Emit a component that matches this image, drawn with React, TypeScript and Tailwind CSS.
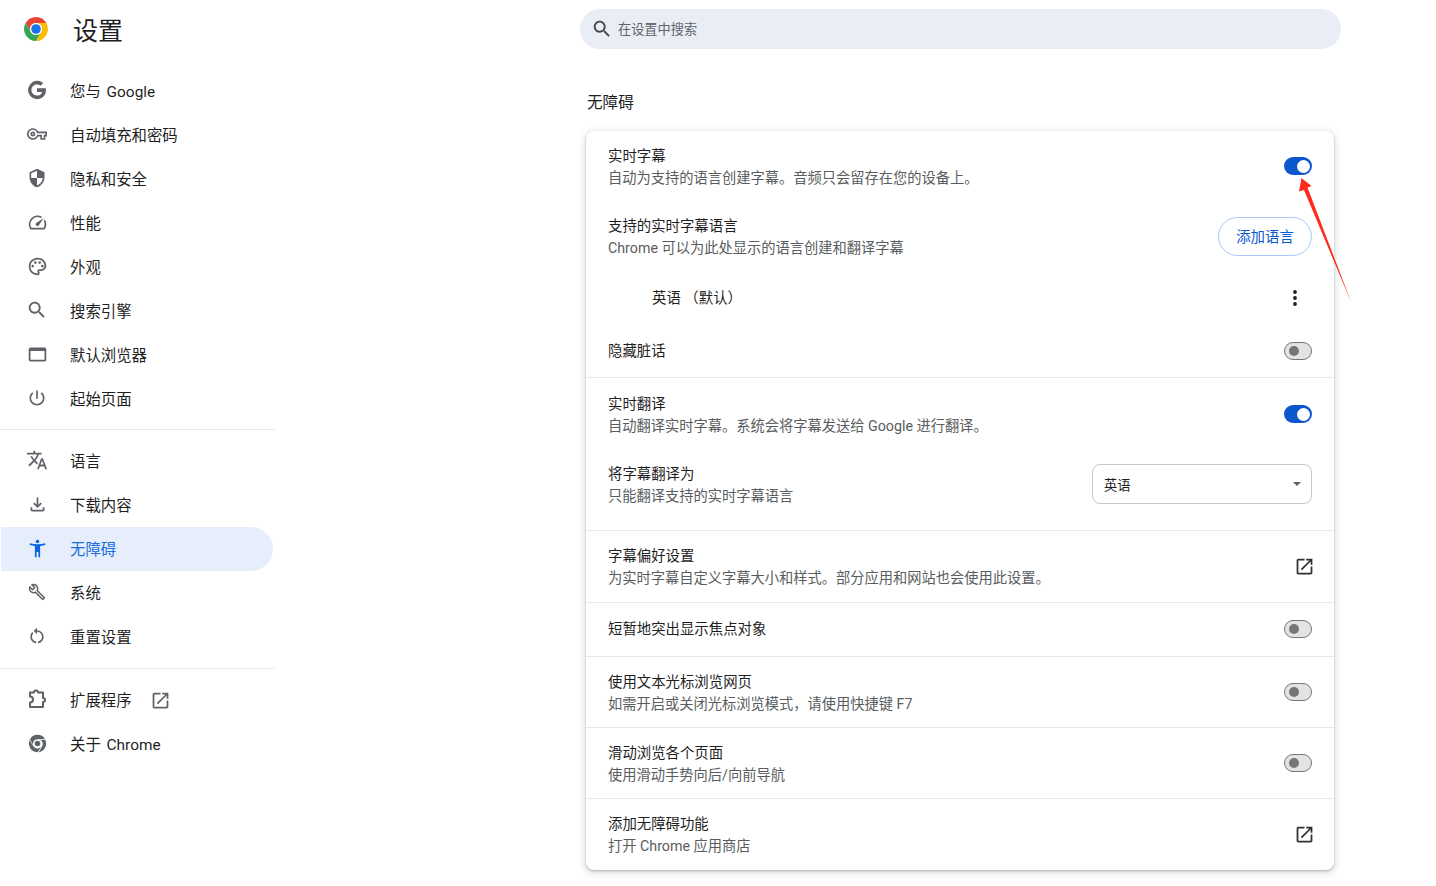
import React from 'react';

const icons: Record<string, string> = {
  key: 'M22 19h-6v-4h-2.68c-1.14 2.42-3.6 4-6.32 4-3.86 0-7-3.14-7-7s3.14-7 7-7c2.72 0 5.17 1.58 6.32 4H24v6h-2v4zm-4-2h2v-4h2v-2H11.94l-.23-.67C11.01 8.34 9.11 7 7 7c-2.76 0-5 2.24-5 5s2.24 5 5 5c2.11 0 4.01-1.34 4.71-3.33l.23-.67H18v4zM7 15c-1.65 0-3-1.35-3-3s1.35-3 3-3 3 1.35 3 3-1.35 3-3 3zm0-4c-.55 0-1 .45-1 1s.45 1 1 1 1-.45 1-1-.45-1-1-1z',
  google: 'M21.6 10.2H12v3.9h5.5c-.5 2.6-2.7 4-5.5 4a6.1 6.1 0 1 1 3.9-10.8l2.9-2.9A10 10 0 1 0 12 22c5 0 9.8-3.6 9.8-10 0-.6-.1-1.2-.2-1.8z',
  shield: 'M12 1L3 5v6c0 5.55 3.84 10.74 9 12 5.16-1.26 9-6.45 9-12V5l-9-4zm0 10.99h7c-.53 4.12-3.28 7.79-7 8.94V12H5V6.3l7-3.11v8.8z',
  speed: 'M20.38 8.57l-1.23 1.85a8 8 0 0 1-.22 7.58H5.07A8 8 0 0 1 15.58 6.85l1.85-1.23A10 10 0 0 0 3.35 19a2 2 0 0 0 1.72 1h13.85a2 2 0 0 0 1.74-1 10 10 0 0 0-.27-10.44zm-9.79 6.84a2 2 0 0 0 2.83 0l5.66-8.49-8.49 5.66a2 2 0 0 0 0 2.83z',
  palette: 'M12 22C6.49 22 2 17.51 2 12S6.49 2 12 2s10 4.04 10 9c0 3.31-2.69 6-6 6h-1.77c-.28 0-.5.22-.5.5 0 .12.05.23.13.33.41.47.64 1.06.64 1.67A2.5 2.5 0 0 1 12 22zm0-18c-4.41 0-8 3.59-8 8s3.59 8 8 8c.28 0 .5-.22.5-.5a.54.54 0 0 0-.14-.35c-.41-.46-.63-1.05-.63-1.65a2.5 2.5 0 0 1 2.5-2.5H16c2.21 0 4-1.79 4-4 0-3.86-3.59-7-8-7zM5 11.5a1.5 1.5 0 1 0 3 0 1.5 1.5 0 1 0-3 0zM8 7.5a1.5 1.5 0 1 0 3 0 1.5 1.5 0 1 0-3 0zM13 7.5a1.5 1.5 0 1 0 3 0 1.5 1.5 0 1 0-3 0zM16 11.5a1.5 1.5 0 1 0 3 0 1.5 1.5 0 1 0-3 0z',
  search: 'M15.5 14h-.79l-.28-.27C15.41 12.59 16 11.11 16 9.5 16 5.91 13.09 3 9.5 3S3 5.91 3 9.5 5.91 16 9.5 16c1.61 0 3.09-.59 4.23-1.57l.27.28v.79l5 4.99L20.49 19l-4.99-5zm-6 0C7.01 14 5 11.99 5 9.5S7.01 5 9.5 5 14 7.01 14 9.5 11.99 14 9.5 14z',
  browser: 'M20 4H4c-1.11 0-2 .9-2 2v12c0 1.1.89 2 2 2h16c1.1 0 2-.9 2-2V6c0-1.1-.89-2-2-2zm0 14H4V8h16v10z',
  power: 'M13 3h-2v10h2V3zm4.83 2.17l-1.42 1.42C17.99 7.86 19 9.81 19 12c0 3.87-3.13 7-7 7s-7-3.13-7-7c0-2.19 1.01-4.14 2.58-5.42L6.17 5.17C4.23 6.82 3 9.26 3 12c0 4.97 4.03 9 9 9s9-4.03 9-9c0-2.74-1.23-5.18-3.17-6.83z',
  translate: 'M12.87 15.07l-2.54-2.51.03-.03c1.74-1.94 2.98-4.17 3.71-6.53H17V4h-7V2H8v2H1v1.99h11.17C11.5 7.92 10.44 9.75 9 11.35 8.07 10.32 7.3 9.19 6.69 8h-2c.73 1.63 1.73 3.17 2.98 4.56l-5.09 5.02L4 19l5-5 3.11 3.11.76-2.04zM18.5 10h-2L12 22h2l1.12-3h4.75L21 22h2l-4.5-12zm-2.62 7l1.62-4.33L19.12 17h-3.24z',
  download: 'M18 15v3H6v-3H4v3c0 1.1.9 2 2 2h12c1.1 0 2-.9 2-2v-3h-2zm-1-4-1.41-1.41L13 12.17V4h-2v8.17L8.41 9.59 7 11l5 5 5-5z',
  access: 'M20.5 6c-2.61.7-5.67 1-8.5 1s-5.89-.3-8.5-1L3 8c1.86.5 4 .83 6 1v13h2v-6h2v6h2V9c2-.17 4.14-.5 6-1l-.5-2zM12 6c1.1 0 2-.9 2-2s-.9-2-2-2-2 .9-2 2 .9 2 2 2z',
  build: 'M22.61 18.99l-9.08-9.08c.93-2.34.45-5.1-1.44-7C9.79.61 6.21.4 3.66 2.25L7.5 6.1 6.08 7.51 2.25 3.69C.4 6.23.61 9.82 2.91 12.11c1.86 1.86 4.57 2.35 6.89 1.48l9.11 9.11c.39.39 1.02.39 1.41 0l2.3-2.3c.4-.38.4-1.01-.01-1.41zm-3 1.6l-9.46-9.46c-.61.45-1.29.72-2 .82-1.36.2-2.79-.21-3.83-1.25C3.37 9.76 2.93 8.5 3 7.26l3.09 3.09 4.24-4.24-3.09-3.09c1.24-.07 2.49.37 3.44 1.31 1.08 1.08 1.49 2.57 1.24 3.96-.12.71-.42 1.37-.88 1.96l9.45 9.45-.88.89z',
  reset: 'M12 5V2L8 6l4 4V7c3.31 0 6 2.69 6 6 0 2.97-2.17 5.43-5 5.91v2.02c3.95-.49 7-3.85 7-7.93 0-4.42-3.58-8-8-8zm-6 8c0-1.65.67-3.15 1.76-4.24L6.34 7.34C4.9 8.79 4 10.79 4 13c0 4.08 3.05 7.44 7 7.93v-2.02c-2.83-.48-5-2.94-5-5.91z',
  open: 'M19 19H5V5h7V3H5c-1.11 0-2 .9-2 2v14c0 1.1.89 2 2 2h14c1.1 0 2-.9 2-2v-7h-2v7zM14 3v2h3.59l-9.83 9.83 1.41 1.41L19 6.41V10h2V3h-7z',
  chrome: 'M12 2a10 10 0 0 1 8.66 5H12a5 5 0 0 0-4.33 7.5L3.34 7A10 10 0 0 1 12 2zM3 8l4.3 7.2A5.4 5.4 0 0 0 15.8 16l-3.4 6A10 10 0 0 1 3 8zM21 8a10 10 0 0 1-7.6 13.9l3.6-6.3A5.4 5.4 0 0 0 15.5 8H21zM8.8 12a3.2 3.2 0 1 0 6.4 0 3.2 3.2 0 1 0-6.4 0z',
};

function Icon({ name, size = 20, className = '' }: { name: string; size?: number; className?: string }) {
  return (
    <svg width={size} height={size} viewBox="0 0 24 24" fill="currentColor" className={`shrink-0 ${className}`}>
      <path d={icons[name]} />
    </svg>
  );
}

function ExtensionIcon() {
  return (
    <svg width="20" height="20" viewBox="0 0 20 20" fill="none" stroke="currentColor" strokeWidth="2" className="shrink-0 -mt-[2px] text-[#5f6368]">
      <path d="M3 3.5H7a2 2 0 0 1 4 0H16V9a2 2 0 0 1 0 4v5H3v-4.5a3 3 0 0 0 0-6z" strokeLinejoin="round" />
    </svg>
  );
}

function ChromeLogo() {
  return (
    <svg width="24" height="24" viewBox="2 2 20 20" className="shrink-0">
      <path d="M12 2a10 10 0 0 1 8.66 5H12a5 5 0 0 0-4.33 7.5L3.34 7A10 10 0 0 1 12 2z" fill="#ea4335" />
      <path d="M3.34 7A10 10 0 0 0 12 22l4.33-7.5a5 5 0 0 1-8.66 0z" fill="#34a853" />
      <path d="M20.66 7A10 10 0 0 1 12 22l4.33-7.5A5 5 0 0 0 12 7z" fill="#fbbc04" />
      <circle cx="12" cy="12" r="5" fill="#fff" />
      <circle cx="12" cy="12" r="4" fill="#1a73e8" />
    </svg>
  );
}

function NavItem({
  icon,
  label,
  size = 20,
  active,
  external,
}: {
  icon: string;
  label: string;
  size?: number;
  active?: boolean;
  external?: boolean;
}) {
  return (
    <div
      className={`flex h-11 w-[272px] items-center gap-[23px] rounded-r-full pl-[26px] text-[15.4px] ${
        active ? 'bg-[#e6eefb] text-[#1a6fe0]' : 'text-[#1f1f1f]'
      }`}
    >
      <div className="flex w-5 shrink-0 justify-center">
        {icon === 'extension' ? (
          <ExtensionIcon />
        ) : (
          <Icon name={icon} size={size} className={`-mx-1 -mt-[2px] ${active ? 'text-[#0b66e0]' : 'text-[#5f6368]'}`} />
        )}
      </div>
      <span className="pt-1 [word-spacing:2px]">{label}</span>
      {external && <Icon name="open" size={21} className="-ml-[5px] text-[#5f6368]" />}
    </div>
  );
}

function Toggle({ on }: { on?: boolean }) {
  if (on) {
    return (
      <div className="flex h-[18px] w-7 shrink-0 items-center justify-end rounded-full bg-[#0b57d0] pr-[2px]">
        <div className="h-[13px] w-[13px] rounded-full bg-white" />
      </div>
    );
  }
  return (
    <div className="flex h-[18px] w-7 shrink-0 items-center rounded-full border border-[#747775] bg-[#e3e3e3] pl-1">
      <div className="h-[10px] w-[10px] rounded-full bg-[#747775]" />
    </div>
  );
}

function Row({
  title,
  sub,
  right,
  height,
  border,
}: {
  title: string;
  sub?: string;
  right?: React.ReactNode;
  height: string;
  border?: boolean;
}) {
  return (
    <div className={`flex items-center justify-between px-[22px] ${height} ${border ? 'border-t border-[#e9e9e9]' : ''}`}>
      <div className="pt-[2px] leading-[22px]">
        <div className="text-[14.4px] text-[#1f1f1f]">{title}</div>
        {sub && <div className="-mt-px text-[14.25px] text-[#5a5d60]">{sub}</div>}
      </div>
      {right}
    </div>
  );
}

const External = <Icon name="open" size={21} className="-mr-[3px] text-[#303134]" />;

export default function App() {
  return (
    <div className="relative flex h-[886px] overflow-hidden bg-white font-['Roboto','Noto_Sans_CJK_SC',sans-serif]">
      <aside className="w-[275px] shrink-0">
        <div className="flex h-[69px] items-center gap-[25px] pb-[11px] pl-6">
          <ChromeLogo />
          <h1 className="pt-[6px] text-[25px] leading-8 text-[#1f1f1f]">设置</h1>
        </div>
        <nav className="ml-px">
          <NavItem icon="google" size={22} label="您与 Google" />
          <NavItem icon="key" label="自动填充和密码" />
          <NavItem icon="shield" label="隐私和安全" />
          <NavItem icon="speed" size={21} label="性能" />
          <NavItem icon="palette" size={21} label="外观" />
          <NavItem icon="search" size={22} label="搜索引擎" />
          <NavItem icon="browser" size={21} label="默认浏览器" />
          <NavItem icon="power" label="起始页面" />
        </nav>
        <div className="mt-2 mb-[9px] h-px bg-[#e8e8e8]" />
        <nav className="ml-px">
          <NavItem icon="translate" size={22} label="语言" />
          <NavItem icon="download" size={21} label="下载内容" />
          <NavItem icon="access" size={21} label="无障碍" active />
          <NavItem icon="build" size={18} label="系统" />
          <NavItem icon="reset" size={20} label="重置设置" />
        </nav>
        <div className="mt-[9px] mb-[9px] h-px bg-[#e8e8e8]" />
        <nav className="ml-px">
          <NavItem icon="extension" label="扩展程序" external />
          <NavItem icon="chrome" size={21} label="关于 Chrome" />
        </nav>
      </aside>

      <main className="pl-[305px] pt-[9px]">
        <div className="flex h-10 w-[761px] items-center gap-[5px] rounded-full bg-[#e9eef6] pl-[11px] text-[13.2px] text-[#5f6368]">
          <Icon name="search" size={22} className="text-[#444746]" />
          <span className="pt-[2px]">在设置中搜索</span>
        </div>

        <h2 className="mt-[43px] ml-[7px] text-[15.6px] leading-[22px] text-[#1f1f1f]">无障碍</h2>

        <section className="mt-[17px] ml-[6px] w-[748px] rounded-lg bg-white shadow-[0_1px_2px_rgba(60,64,67,0.3),0_2px_6px_2px_rgba(60,64,67,0.15)]">
          <Row title="实时字幕" sub="自动为支持的语言创建字幕。音频只会留存在您的设备上。" height="h-[70px]" right={<Toggle on />} />
          <Row
            title="支持的实时字幕语言"
            sub="Chrome 可以为此处显示的语言创建和翻译字幕"
            height="h-[71px]"
            right={
              <button className="flex h-[39px] w-[94px] items-center justify-center rounded-full border border-[#a8c7fa] pt-[2px] text-[14.4px] text-[#0b57d0]">
                添加语言
              </button>
            }
          />
          <div className="flex h-[52px] items-center justify-between pl-[66px] pr-[37px] text-[14.4px] text-[#1f1f1f]">
            <span className="pt-[2px]">英语 （默认）</span>
            <svg width="4" height="16" viewBox="0 0 4 16" fill="#1f1f1f">
              <circle cx="2" cy="2" r="1.9" />
              <circle cx="2" cy="8" r="1.9" />
              <circle cx="2" cy="14" r="1.9" />
            </svg>
          </div>
          <Row title="隐藏脏话" height="h-[53px]" right={<Toggle />} />
          <Row title="实时翻译" sub="自动翻译实时字幕。系统会将字幕发送给 Google 进行翻译。" height="h-[73px]" border right={<Toggle on />} />
          <div className="flex h-[80px] items-start justify-between px-[22px]">
            <div className="mt-[12px] pt-[2px] leading-[22px]">
              <div className="text-[14.4px] text-[#1f1f1f]">将字幕翻译为</div>
              <div className="-mt-px text-[14.25px] text-[#5a5d60]">只能翻译支持的实时字幕语言</div>
            </div>
            <div className="mt-[14px] flex h-10 w-[220px] items-center justify-between rounded-lg border border-[#c7c7c7] pl-[11px] pr-[10px] text-[13.3px] text-[#1f1f1f]">
              <span className="pt-[3px]">英语</span>
              <div className="h-0 w-0 border-x-[4px] border-t-[4px] border-x-transparent border-t-[#5f6368]" />
            </div>
          </div>
          <Row title="字幕偏好设置" sub="为实时字幕自定义字幕大小和样式。部分应用和网站也会使用此设置。" height="h-[72px]" border right={External} />
          <Row title="短暂地突出显示焦点对象" height="h-[54px] pb-px" border right={<Toggle />} />
          <Row title="使用文本光标浏览网页" sub="如需开启或关闭光标浏览模式，请使用快捷键 F7" height="h-[71px]" border right={<Toggle />} />
          <Row title="滑动浏览各个页面" sub="使用滑动手势向后/向前导航" height="h-[71px]" border right={<Toggle />} />
          <Row title="添加无障碍功能" sub="打开 Chrome 应用商店" height="h-[72px]" border right={External} />
        </section>
      </main>

      {/* annotation arrow drawn over the page */}
      <svg className="absolute left-[1290px] top-[170px]" width="70" height="140" viewBox="1290 170 70 140">
        <polygon points="1301.5,178 1311.5,186 1307.5,187.5 1351.5,303 1304,190 1299,191.5" fill="#ff2a1a" />
      </svg>
    </div>
  );
}
